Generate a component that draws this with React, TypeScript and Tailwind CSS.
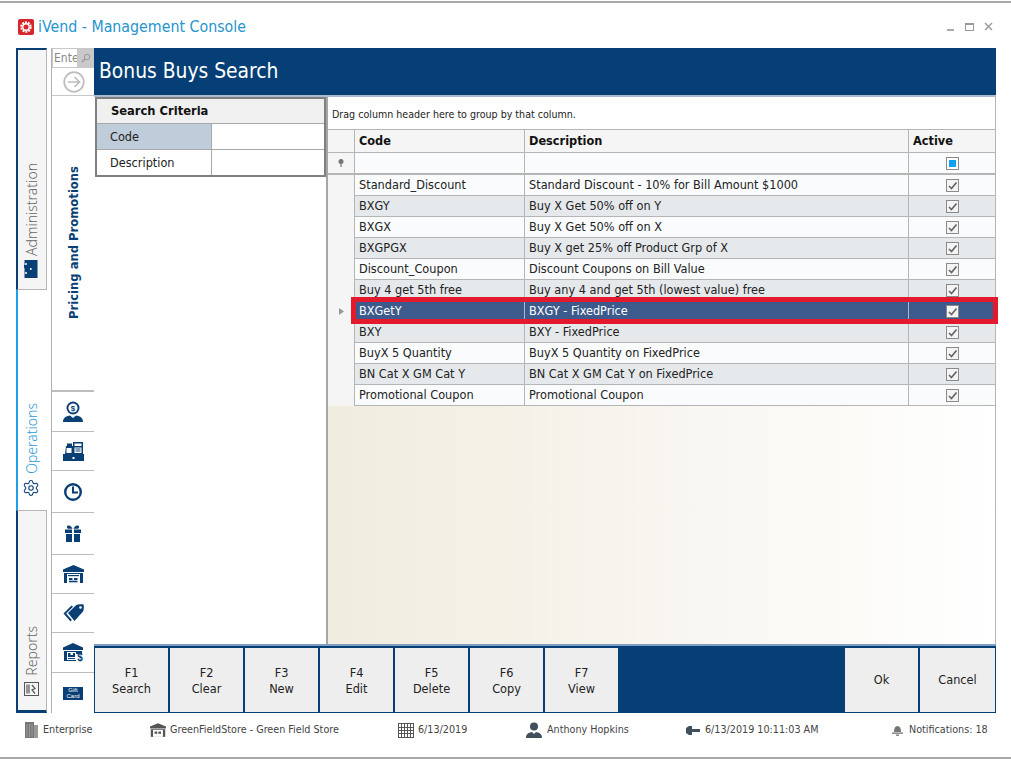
import React from "react";
import { Settings } from "lucide-react";

const F = "font-['DejaVu_Sans',sans-serif] font-stretch-condensed";
const rows: [string, string][] = [
  ["Standard_Discount", "Standard Discount - 10% for Bill Amount $1000"],
  ["BXGY", "Buy X Get 50% off on Y"],
  ["BXGX", "Buy X Get 50% off on X"],
  ["BXGPGX", "Buy X get 25% off Product Grp of X"],
  ["Discount_Coupon", "Discount Coupons on Bill Value"],
  ["Buy 4 get 5th free", "Buy any 4 and get 5th (lowest value) free"],
  ["BXGetY", "BXGY - FixedPrice"],
  ["BXY", "BXY - FixedPrice"],
  ["BuyX 5 Quantity", "BuyX 5 Quantity on FixedPrice"],
  ["BN Cat X GM Cat Y", "BN Cat X GM Cat Y on FixedPrice"],
  ["Promotional Coupon", "Promotional Coupon"],
];

const navy = "#0a3f75";

function Check() {
  return (
    <div className="w-[13px] h-[13px] border border-[#8a8a8a] bg-[#f4f4f4] flex items-center justify-center">
      <svg width="11" height="11" viewBox="0 0 11 11"><path d="M2 6 L4.5 8.5 L9.5 2.5" fill="none" stroke="#666" strokeWidth="1.7" /></svg>
    </div>
  );
}

const Sales = () => (
  <svg width="22" height="22" viewBox="0 0 22 22" fill={navy}>
    <circle cx="11" cy="7" r="6.5" />
    <circle cx="11" cy="7" r="4.6" fill="#fff" />
    <text x="11" y="10" textAnchor="middle" fontSize="8" fontWeight="700" fontFamily="Liberation Sans">$</text>
    <path d="M1 21 C1 16 5 15 8 14.5 L11 17 L14 14.5 C17 15 21 16 21 21 Z" />
  </svg>
);
const Register = () => (
  <svg width="21" height="19" viewBox="0 0 21 19" fill={navy}>
    <path d="M3 4 H4 V1.5 H9 V4 H10 V0 H20 V12 H21 V19 H0 V12 H2 Z" />
    <rect x="11.5" y="1.5" width="7" height="2.5" fill="#fff" />
    <rect x="11.5" y="5.5" width="7" height="5.5" fill="#fff" />
    <rect x="12.5" y="6.5" width="5" height="1" />
    <rect x="12.5" y="8.5" width="5" height="1" />
    <rect x="3.5" y="6" width="5" height="5" fill="#fff" />
    <rect x="9.5" y="15" width="2" height="2" fill="#fff" />
  </svg>
);
const Clock = () => (
  <svg width="20" height="20" viewBox="0 0 20 20" fill="none" stroke={navy}>
    <circle cx="10" cy="10" r="7.8" strokeWidth="2.4" />
    <path d="M10 4.5 V10.5 H15" strokeWidth="2" />
  </svg>
);
const Gift = () => (
  <svg width="16" height="17" viewBox="0 0 16 17" fill={navy}>
    <path d="M3 0.5 C5 0 7 2 7.5 3.8 H3 C1.5 3 1.5 1 3 0.5 Z M13 0.5 C11 0 9 2 8.5 3.8 H13 C14.5 3 14.5 1 13 0.5 Z" />
    <path d="M0 4.5 H7 V8 H0 Z M9 4.5 H16 V8 H9 Z M1 9 H7 V17 H1 Z M9 9 H15 V17 H9 Z" />
  </svg>
);
const Warehouse = () => (
  <svg width="21" height="18" viewBox="0 0 21 18" fill={navy}>
    <path d="M10.5 0 L21 4.5 V7 H0 V4.5 Z" />
    <path d="M1 8 H20 V18 H1 Z" />
    <rect x="4" y="9" width="13" height="9" fill="#fff" />
    <rect x="5" y="10" width="11" height="1.2" />
    <rect x="6" y="13" width="3.5" height="2" />
    <rect x="11" y="13" width="3.5" height="2" />
    <rect x="6" y="15.7" width="8.5" height="1.6" />
  </svg>
);
const Tags = () => (
  <svg width="21" height="18" viewBox="0 0 21 18" fill={navy}>
    <path d="M5 9 L13 1.2 C14 0.2 20 0 20.5 0.5 C21 1 21 6.5 20 7.5 L11.5 17 Z" />
    <circle cx="17.5" cy="3.5" r="1.3" fill="#fff" />
    <path d="M8.5 1.5 L0.5 9.5 L7.5 17.5 L8.8 16 L3.2 9.5 L10 2.8 Z" />
  </svg>
);
const WarehouseDollar = () => (
  <svg width="21" height="19" viewBox="0 0 21 19" fill={navy}>
    <path d="M10 0 L20 4.5 V7 H0 V4.5 Z" />
    <path d="M1 8 H19 V18 H1 Z" />
    <rect x="4" y="9" width="9" height="8" fill="#fff" />
    <path d="M5 10 H7.5 V12 H10 V10 H12 V14 H5 Z" />
    <path d="M5 15 H12 V16 H5 Z" />
    <rect x="13" y="11" width="8" height="8" fill="#fff" />
    <text x="17" y="18.3" textAnchor="middle" fontSize="10" fontWeight="700" fontFamily="Liberation Sans">$</text>
  </svg>
);
const GiftCard = () => (
  <div className="w-[20px] h-[13px] bg-[#0a3f75] text-white text-[6px] leading-[6px] flex flex-col items-center justify-center font-['Liberation_Sans',sans-serif]">
    <span>Gift</span>
    <span>Card</span>
  </div>
);

const icons = [
  { h: "h-[40px]", el: <Sales /> },
  { h: "h-[39px]", el: <Register /> },
  { h: "h-[42px]", el: <Clock /> },
  { h: "h-[42px]", el: <Gift /> },
  { h: "h-[39px]", el: <Warehouse /> },
  { h: "h-[39px]", el: <Tags /> },
  { h: "h-[40px]", el: <WarehouseDollar /> },
  { h: "h-[40px]", el: <GiftCard /> },
];

const buttons = [
  ["F1", "Search"], ["F2", "Clear"], ["F3", "New"], ["F4", "Edit"],
  ["F5", "Delete"], ["F6", "Copy"], ["F7", "View"],
];

function Vert({ className, children }: { className?: string; children: React.ReactNode }) {
  return <span className={`[writing-mode:vertical-rl] rotate-180 whitespace-nowrap ${className ?? ""}`}>{children}</span>;
}

export default function App() {
  return (
    <div className={`${F} relative w-[1011px] h-[759px] bg-white overflow-hidden flex flex-col text-[12.6px] text-[#222]`}>
      <div className="h-[2px] mt-px bg-[#a8a8a8] shrink-0" />
      {/* title bar */}
      <div className="h-[45px] shrink-0 flex items-center pl-[18px] pr-[18px] pt-[2px]">
        <svg width="16" height="16" viewBox="0 0 16 16" className="mr-[4px]">
          <rect width="16" height="16" rx="2" fill="#d6262c" />
          <circle cx="8" cy="8" r="4.8" fill="none" stroke="#fff" strokeWidth="1.8" strokeDasharray="2 1" />
          <circle cx="8" cy="8" r="3.2" fill="none" stroke="#fff" strokeWidth="1.4" />
        </svg>
        <span className="text-[15.8px] text-[#2594cf]">iVend - Management Console</span>
        <div className="ml-auto flex items-center gap-[10px]">
          <svg width="8" height="8" viewBox="0 0 8 8"><rect y="6" width="7" height="2" fill="#aaa" /></svg>
          <svg width="9" height="8" viewBox="0 0 9 8"><rect x="0.5" y="0.5" width="8" height="7" fill="none" stroke="#999" /><rect x="0" y="0" width="9" height="2" fill="#999" /></svg>
          <svg width="9" height="9" viewBox="0 0 9 9"><path d="M1 1 L8 8 M8 1 L1 8" stroke="#999" strokeWidth="1.4" /></svg>
        </div>
      </div>
      {/* main */}
      <div className="h-[665px] shrink-0 flex pl-[16px] pr-[15px]">
        {/* rail */}
        <div className="w-[31px] shrink-0 flex flex-col">
          <div className="h-[242px] bg-[#f5f5f5] border-l-2 border-l-[#0a3f75] border-r border-b border-[#b5b5b5] border-t-2 border-t-[#0a3f75] flex flex-col items-center justify-end pb-[11px] pr-[2px]">
            <Vert className="font-['Noto_Sans',sans-serif] text-[14px] text-[#666] font-light mb-[4px]">Administration</Vert>
            <svg width="14" height="18" viewBox="0 0 14 18" fill="#0a3f75"><rect width="13" height="18" x="0.5" /><rect x="0" y="5" width="2" height="3" /><circle cx="2" cy="4" r="1" fill="#fff" /><circle cx="2" cy="13" r="1" fill="#fff" /><rect x="6" y="8" width="1.5" height="2" fill="#fff" /></svg>
          </div>
          <div className="h-[220px] bg-white border-l-2 border-l-[#1ea1e6] flex flex-col items-center justify-end pb-[13px] pr-[3px]">
            <Vert className="font-['Noto_Sans',sans-serif] text-[14px] text-[#2a9ad6] font-light mb-[5px]">Operations</Vert>
            <Settings size={18} strokeWidth={1.4} className="text-[#0a3f75]" />
          </div>
          <div className="h-[203px] bg-[#f5f5f5] border-l-2 border-l-[#0a3f75] border-r border-t border-[#b5b5b5] border-b-[3px] border-b-[#0a3f75] flex flex-col items-center justify-end pb-[14px] pr-[2px]">
            <Vert className="font-['Noto_Sans',sans-serif] text-[14px] text-[#666] font-light mb-[6px]">Reports</Vert>
            <svg width="15" height="14" viewBox="0 0 15 14" fill="none" stroke="#555"><rect x="0.5" y="0.5" width="14" height="13" /><path d="M3 2.5 V11.5 M5 2.5 V11.5 M8 3 L11 6.5 L8 8 L11 11.5" strokeWidth="1.2" /></svg>
          </div>
        </div>
        {/* nav column */}
        <div className="ml-[4px] w-[43px] shrink-0 flex flex-col border-l border-[#b0b0b0]">
          <div className="h-[48px] shrink-0 flex flex-col border-b border-[#c8c8c8]">
            <div className="h-[20px] flex shrink-0 border border-[#c8c8c8] border-r-0">
              <div className="w-[24px] text-[12px] leading-[18px] text-[#888] overflow-hidden pl-[1px]">Enter</div>
              <div className="flex-1 bg-[#c9c9c9] flex items-center justify-center">
                <svg width="10" height="10" viewBox="0 0 10 10" fill="none" stroke="#999"><circle cx="6" cy="4" r="2.8" /><path d="M4 6 L1 9" strokeWidth="1.4" /></svg>
              </div>
            </div>
            <div className="flex-1 flex items-center justify-center pl-[1px] pt-[1px]">
              <svg width="22" height="22" viewBox="0 0 22 22" fill="none" stroke="#bdbdbd" strokeWidth="1.7"><circle cx="11" cy="11" r="9.8" /><path d="M5 11 H16 M11.5 6 L16.5 11 L11.5 16" /></svg>
            </div>
          </div>
          <div className="h-[296px] shrink-0 flex flex-col items-center pt-[70px] pl-[2px] border-b-2 border-[#bdbdbd]">
            <Vert className="text-[12.9px] font-bold text-[#0a3f75]">Pricing and Promotions</Vert>
          </div>
          {icons.map((ic, i) => (
            <div key={i} className={`${ic.h} shrink-0 flex items-center justify-center ${i < 7 ? "border-b border-[#bdbdbd]" : ""}`}>
              {ic.el}
            </div>
          ))}
        </div>
        {/* content */}
        <div className="flex-1 min-w-0 flex flex-col">
          <div className="h-[47px] shrink-0 bg-[#053f75] flex items-center pl-[5px] pt-px text-white text-[20.8px]">Bonus Buys Search</div>
          <div className="h-[2px] shrink-0 bg-[#a9bbcd]" />
          <div className="h-[547px] shrink-0 flex">
            {/* criteria */}
            <div className="w-[234px] shrink-0 pl-px border-r-2 border-[#a5a5a5]">
              <div className="w-[231px] border-2 border-[#808080] flex flex-col">
                <div className="h-[25px] bg-[#f0f0f0] border-b border-[#a8a8a8] pl-[14px] flex items-center font-bold text-[#111] text-[12.8px]">Search Criteria</div>
                <div className="h-[26px] flex border-b border-[#a8a8a8]">
                  <div className="w-[115px] bg-[#bfccd9] border-r border-[#a8a8a8] pl-[13px] pt-px flex items-center">Code</div>
                  <div className="flex-1" />
                </div>
                <div className="h-[25px] flex">
                  <div className="w-[115px] border-r border-[#a8a8a8] pl-[13px] pt-px flex items-center">Description</div>
                  <div className="flex-1" />
                </div>
              </div>
            </div>
            {/* grid */}
            <div className="flex-1 min-w-0 flex flex-col border-r border-[#b5b5b5] bg-gradient-to-r from-[#f0ecdf] to-white">
              <div className="h-[33px] shrink-0 bg-white pl-[4px] pt-[3px] flex items-center text-[10.6px] text-[#222] border-b border-[#b5b5b5]">Drag column header here to group by that column.</div>
              <div className="h-[23px] shrink-0 flex bg-[#f5f5f5] border-b border-[#b5b5b5] font-bold text-[12.6px] text-[#111]">
                <div className="w-[27px] border-r border-[#b5b5b5]" />
                <div className="w-[170px] border-r border-[#b5b5b5] pl-[4px] flex items-center">Code</div>
                <div className="w-[384px] border-r border-[#b5b5b5] pl-[4px] flex items-center">Description</div>
                <div className="flex-1 pl-[4px] flex items-center">Active</div>
              </div>
              <div className="h-[22px] shrink-0 flex bg-[#f9fbfd] border-b-2 border-[#b5b5b5]">
                <div className="w-[27px] bg-[#f5f5f5] border-r border-[#b5b5b5] flex items-center justify-center">
                  <svg width="6" height="8" viewBox="0 0 6 8" fill="#777"><circle cx="3" cy="2.5" r="2.5" /><rect x="2.4" y="4" width="1.2" height="4" /></svg>
                </div>
                <div className="w-[170px] border-r border-[#b5b5b5]" />
                <div className="w-[384px] border-r border-[#b5b5b5]" />
                <div className="flex-1 flex items-center justify-center">
                  <div className="w-[13px] h-[13px] border border-[#8a8a8a] bg-white flex items-center justify-center"><div className="w-[7px] h-[7px] bg-[#0ba2f0]" /></div>
                </div>
              </div>
              {rows.map(([c, d], i) => {
                const sel = i === 6;
                const alt = i % 2 === 1;
                const cellBg = sel ? "bg-[#3c5a8c] text-white" : alt ? "bg-[#e6e9ec]" : "bg-[#f9fbfd]";
                const line = sel ? "border-[#aab8cc]" : "border-[#b5b5b5]";
                return (
                  <div key={c} className="h-[21px] shrink-0 flex">
                    <div className="w-[27px] bg-[#f5f5f5] border-r border-[#b5b5b5] flex items-center justify-center">
                      {sel && <svg width="5" height="7" viewBox="0 0 5 7" fill="#999"><path d="M0 0 L5 3.5 L0 7 Z" /></svg>}
                    </div>
                    <div className={`flex-1 flex border-b border-[#b5b5b5] ${cellBg}`}>
                      <div className={`w-[170px] border-r ${line} pl-[4px] pt-px flex items-center whitespace-nowrap`}>{c}</div>
                      <div className={`w-[384px] border-r ${line} pl-[4px] pt-px flex items-center whitespace-nowrap`}>{d}</div>
                      <div className="flex-1 flex items-center justify-center"><Check /></div>
                    </div>
                  </div>
                );
              })}
            </div>
          </div>
          <div className="h-[2px] shrink-0 bg-[#7f9fc2]" />
          {/* toolbar */}
          <div className="h-[67px] shrink-0 bg-[#053f75] flex pt-[2px] pb-[1px] pl-px pr-px justify-between">
            <div className="flex gap-[2px]">
              {buttons.map(([a, b]) => (
                <div key={a} className="w-[73px] bg-[#eeeeee] flex flex-col items-center justify-center pt-px leading-[16px] text-[#222]">
                  <span>{a}</span>
                  <span>{b}</span>
                </div>
              ))}
            </div>
            <div className="flex gap-[2px]">
              <div className="w-[73px] bg-[#eeeeee] flex items-center justify-center">Ok</div>
              <div className="w-[75px] bg-[#eeeeee] flex items-center justify-center">Cancel</div>
            </div>
          </div>
        </div>
      </div>
      {/* status */}
      <div className="relative h-[34px] shrink-0 flex items-center pt-[1px] text-[10.7px] text-[#444]">
        <div className="w-[150px] pl-[25px] flex items-center gap-[5px] shrink-0">
          <svg width="13" height="16" viewBox="0 0 13 16" fill="#777"><rect width="9" height="16" /><rect x="9" y="3" width="4" height="13" fill="#999" /><path d="M2 2 V15 M4.5 2 V15 M7 2 V15" stroke="#aaa" strokeWidth="0.7" /></svg>
          <span>Enterprise</span>
        </div>
        <div className="w-[248px] flex items-center gap-[4px] shrink-0">
          <svg width="16" height="14" viewBox="0 0 21 18" fill="#555"><path d="M10.5 0 L21 4.5 V7 H0 V4.5 Z" /><path d="M1 8 H20 V18 H1 Z" /><rect x="4" y="9" width="13" height="9" fill="#fff" /><rect x="6" y="11" width="3.5" height="3" /><rect x="11" y="11" width="3.5" height="3" /></svg>
          <span>GreenFieldStore - Green Field Store</span>
        </div>
        <div className="w-[128px] flex items-center gap-[4px] shrink-0">
          <svg width="16" height="15" viewBox="0 0 16 15" fill="none" stroke="#555" strokeWidth="1"><rect x="0.5" y="0.5" width="15" height="14" /><path d="M0 4.5 H16 M0 7.5 H16 M0 10.5 H16 M3.5 1 V14 M6.5 1 V14 M9.5 1 V14 M12.5 1 V14" /></svg>
          <span>6/13/2019</span>
        </div>
        <div className="w-[160px] flex items-center gap-[5px] shrink-0">
          <svg width="16" height="16" viewBox="0 0 16 16" fill="#3f4f5c"><circle cx="8" cy="4.5" r="4" /><path d="M0 16 C0 11 4 10.5 6 10 L8 12 L10 10 C12 10.5 16 11 16 16 Z" /></svg>
          <span>Anthony Hopkins</span>
        </div>
        <div className="w-[206px] flex items-center gap-[5px] shrink-0">
          <svg width="14" height="9" viewBox="0 0 14 9" fill="#3f4f5c"><path d="M0 2 L3 0 H6 V3 H14 V6 H6 V9 H3 L0 7 Z" /></svg>
          <span>6/13/2019 10:11:03 AM</span>
        </div>
        <div className="flex items-center gap-[6px]">
          <svg width="11" height="11" viewBox="0 0 11 11" fill="#777"><path d="M2 7 C2 3 3 1 5.5 1 C8 1 9 3 9 7 Z" /><rect y="7.5" width="11" height="1.3" /><rect x="4" y="9.5" width="3" height="1.3" /></svg>
          <span>Notifications: 18</span>
        </div>
      </div>
      <div className="absolute left-0 right-0 top-[757px] h-[2px] bg-[#a8a8a8]" />
      {/* red annotation */}
      <div className="absolute left-[351px] top-[297px] w-[647px] h-[27px] border-[5px] border-[#e3192d]" />
    </div>
  );
}
